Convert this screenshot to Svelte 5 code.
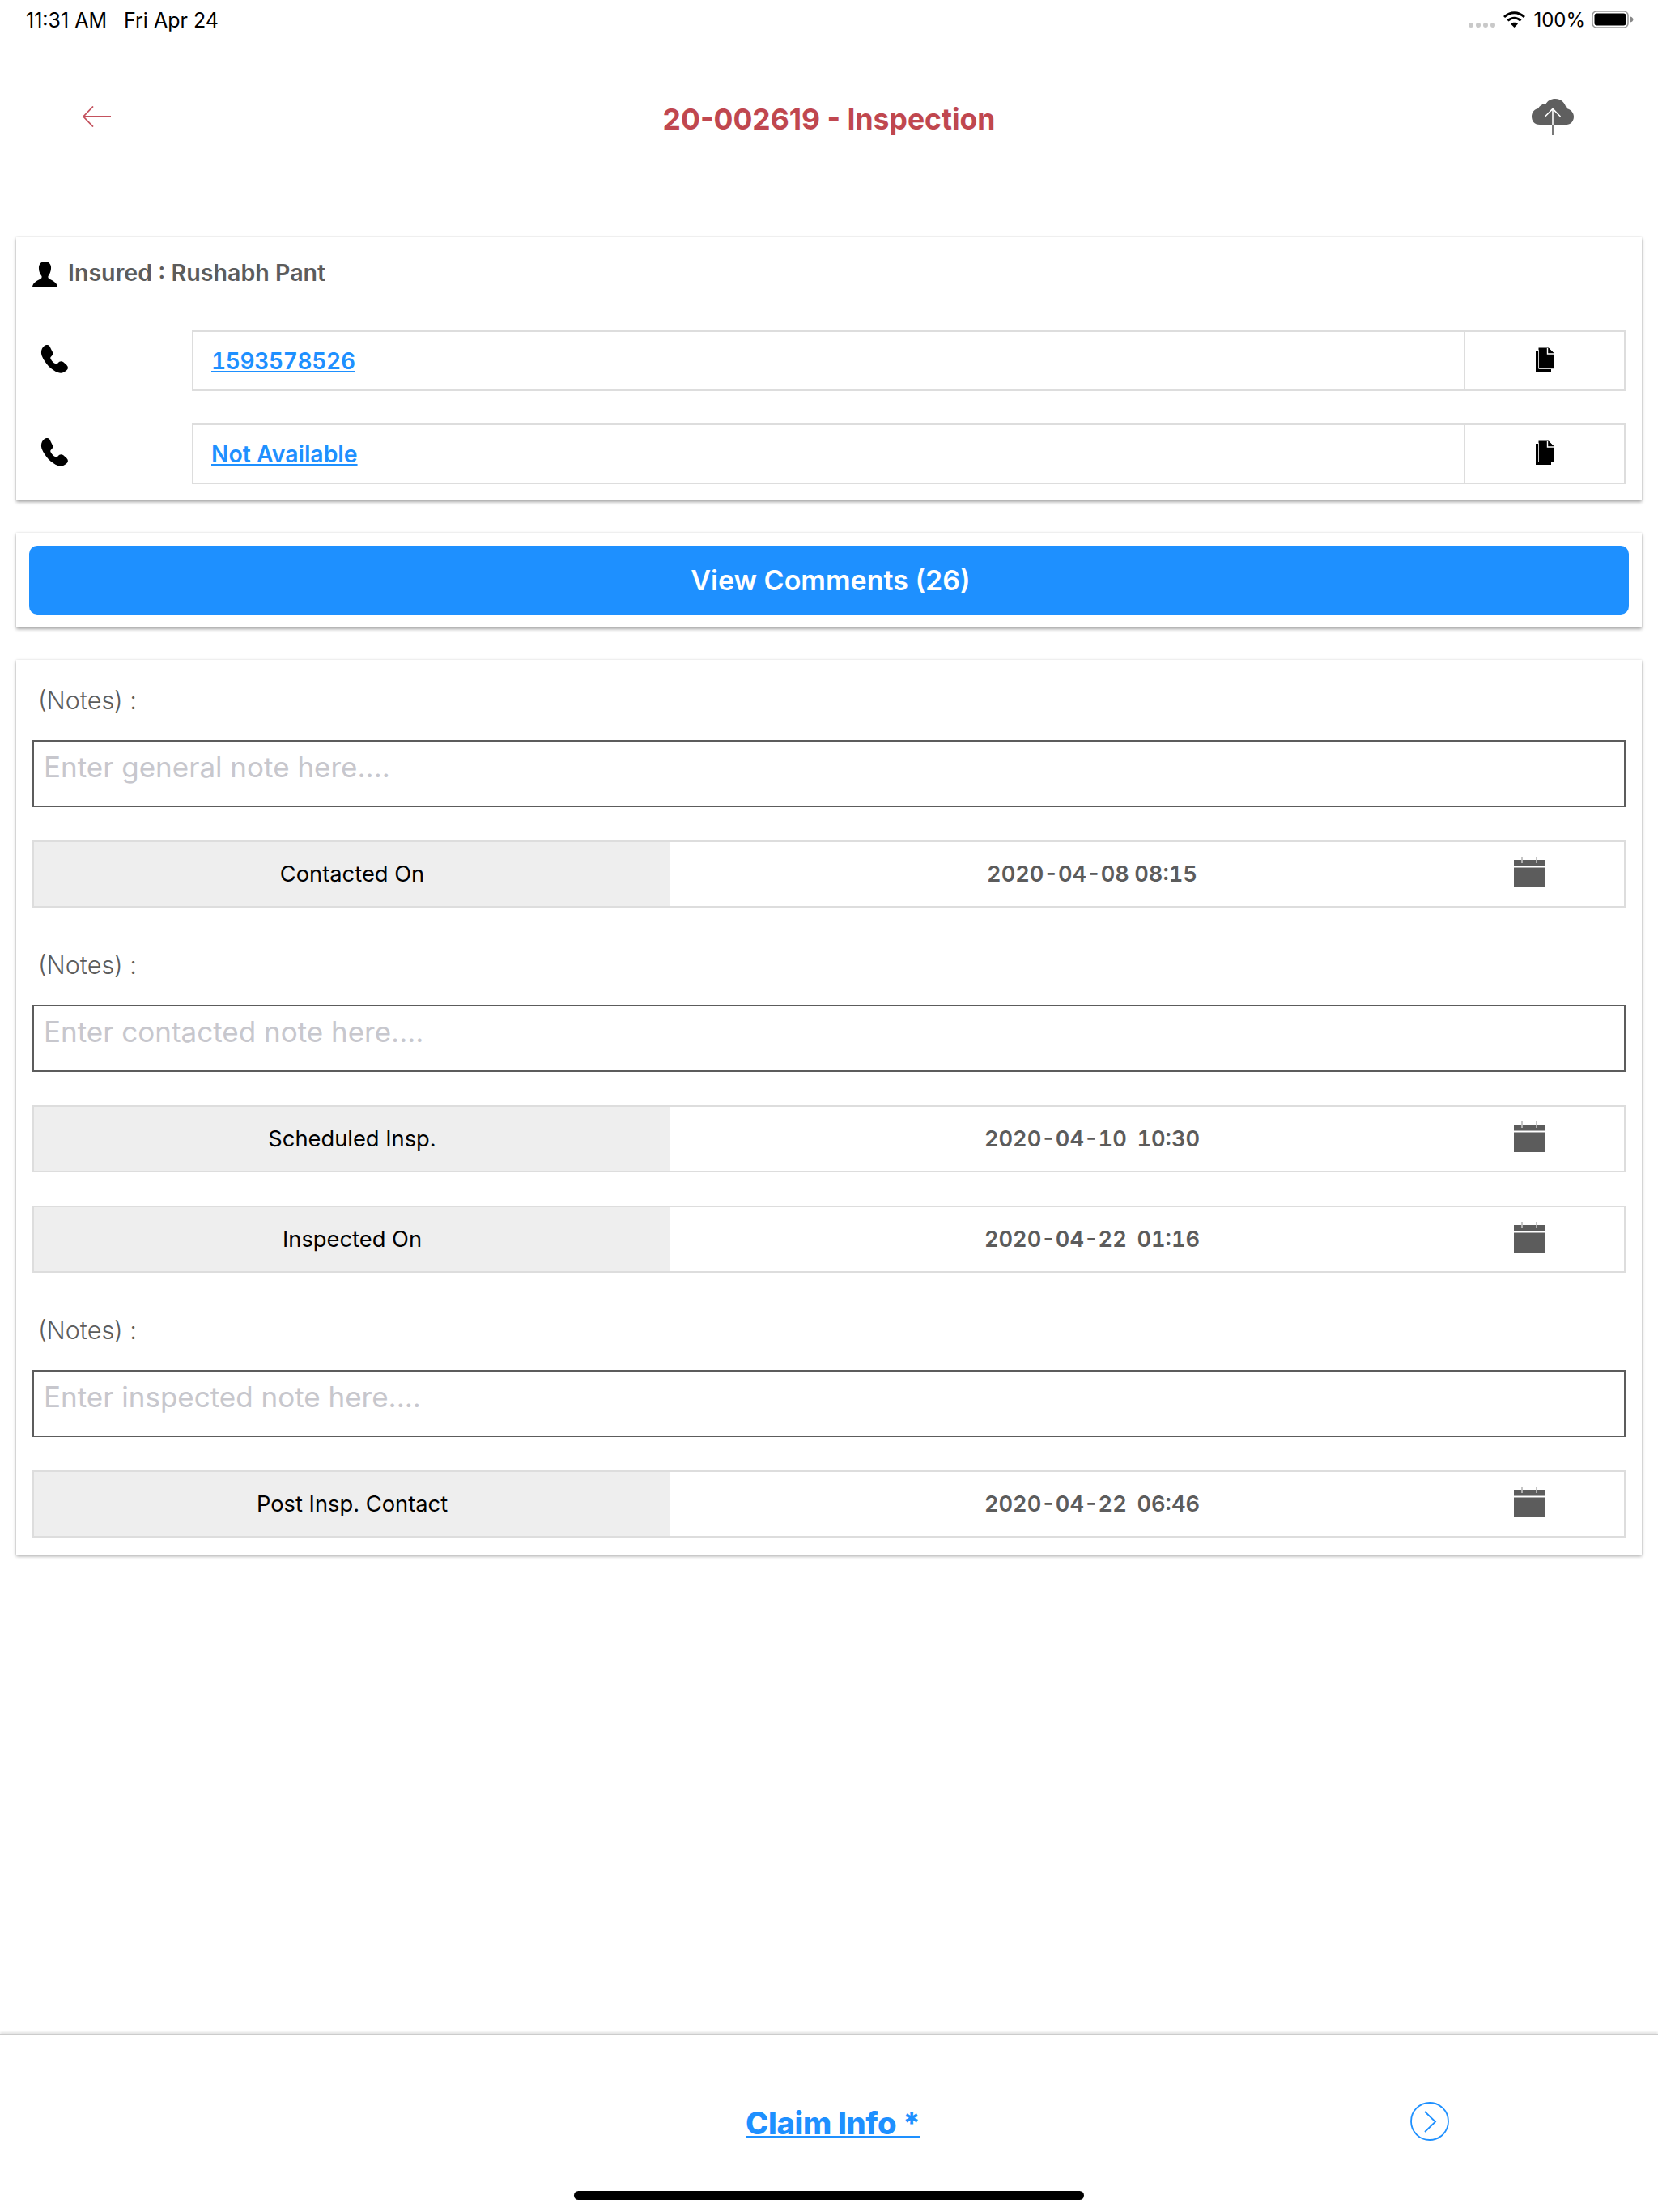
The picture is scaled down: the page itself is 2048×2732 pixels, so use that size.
<script>
  const blocks = [
    { note: 'Enter general note here....', rows: [['Contacted On', '2020-04-08 08:15']] },
    { note: 'Enter contacted note here....', rows: [['Scheduled Insp.', '2020-04-10  10:30'], ['Inspected On', '2020-04-22  01:16']] },
    { note: 'Enter inspected note here....', rows: [['Post Insp. Contact', '2020-04-22  06:46']] }
  ];
  const phones = ['1593578526', 'Not Available'];
</script>

{#snippet phoneIcon()}
  <svg class="phone" viewBox="0 0 34 35" width="34" height="35"><path d="M5 1C8 -1 11 0 12 3L15 9C16 11 15 13 13 14.500C12 15.500 12 16.500 13 18C14.500 20.500 16 22 18 23C19.500 24 20.500 23.500 21.500 22.500C23.500 20 25.500 19.500 28 21L32 24.500C34.500 27 34.500 29.500 32 31.500C29 34.500 25.500 35.500 21.500 34C13.500 31 5.500 23 1.500 13C0 8 1.500 3.500 5 1Z" fill="#000"/></svg>
{/snippet}

{#snippet copyIcon()}
  <svg viewBox="0 0 23 30" width="23" height="30"><path d="M0 4H4V26H19V30H0Z" fill="#000"/><path d="M3.500 0.500H16L22.500 7V26.500H3.500Z" fill="#000"/><path d="M4 26.500H22.500V25M3.500 26.500V3" fill="none" stroke="#ccc" stroke-width="1"/><path d="M14.500 1V8H22" fill="none" stroke="#fff" stroke-width="1.400"/><path d="M16 0L23 7V0Z" fill="#fff"/></svg>
{/snippet}

{#snippet calendar()}
  <svg class="cal" viewBox="0 0 38 38" width="38" height="38"><rect x="0" y="4" width="38" height="7.500" fill="#5c5c5c"/><rect x="0" y="13.500" width="38" height="24.500" fill="#5c5c5c"/><path d="M10 0V4M28 0V4" stroke="#8a8a8a" stroke-width="1"/><path d="M10 4V8M28 4V8" stroke="#fff" stroke-width="1"/></svg>
{/snippet}

<div class="page">
  <div class="status">
    <span class="time">11:31 AM</span>
    <span class="date">Fri Apr 24</span>
    <span class="spacer"></span>
    <span class="dots"><i></i><i></i><i></i><i></i></span>
    <svg class="wifi" viewBox="0 0 27 20" width="27" height="20"><path d="M1 7C8.500 0 18.500 0 26 7" fill="none" stroke="#000" stroke-width="3"/><path d="M5.500 11.500C10.500 7 16.500 7 21.500 11.500" fill="none" stroke="#000" stroke-width="3"/><path d="M9 15.500L13.500 20L18 15.500C15.500 13 11.500 13 9 15.500Z" fill="#000"/></svg>
    <span class="pct">100%</span>
    <svg class="batt" viewBox="0 0 52 22" width="52" height="22"><rect x="1" y="1" width="44" height="20" rx="5" fill="#fff" stroke="#999" stroke-width="1.600"/><rect x="3.500" y="3.500" width="39" height="15" rx="3" fill="#000"/><path d="M48 7.500C50 8 51.500 9.500 51.500 11C51.500 12.500 50 14 48 14.500Z" fill="#888"/></svg>
  </div>

  <header class="head">
    <svg class="back" viewBox="0 0 35 26" width="35" height="26"><path d="M35 13H1M13 0.500L1 13L13 25.500" fill="none" stroke="#c4525e" stroke-width="1.800"/></svg>
    <h1>20-002619 - Inspection</h1>
    <svg class="cloud" viewBox="0 0 52 45" width="52" height="45">
      <path d="M10 32C3 32 0 27 0 22C0 17 3 13 8 12C10 8 14 6 17 7C20 2 24 0 29 0C37 0 41 5 43 12C48 13 52 17 52 22C52 28 48 32 43 32Z" fill="#5f5f5f"/>
      <path d="M26 45V12M16.500 22L26 12.500L35.500 22" fill="none" stroke="#fff" stroke-width="1.600"/>
      <path d="M26 32V45" stroke="#6a6a6a" stroke-width="1.800"/>
    </svg>
  </header>

  <section class="card info">
    <div class="insured">
      <svg viewBox="0 0 31 31" width="31" height="31"><path d="M15.500 0C21 0 23.500 4 23 9C22.700 13 21 16 19.500 18C19 20 20 21 22 22C26 24 30 26 31 31L0 31C1 26 5 24 9 22C11 21 12 20 11.500 18C10 16 8 13 8 9C7.500 4 10 0 15.500 0Z" fill="#000"/></svg>
      <span>Insured : Rushabh Pant</span>
    </div>
    {#each phones as p, i}
      <div class="contact">
        <span class="phonecell">{@render phoneIcon()}</span>
        <div class="box">
          <a class="num" class:digits={i === 0} href="#top">{p}</a>
          <span class="copy">{@render copyIcon()}</span>
        </div>
      </div>
    {/each}
  </section>

  <section class="card comments">
    <button type="button">View Comments (26)</button>
  </section>

  <section class="card form">
    {#each blocks as b}
      <div class="notes">(Notes) :</div>
      <textarea class="field" placeholder={b.note} rows="1"></textarea>
      {#each b.rows as r}
        <div class="row">
          <div class="lbl">{r[0]}</div>
          <div class="val">{r[1]}</div>
          {@render calendar()}
        </div>
      {/each}
    {/each}
  </section>

  <footer class="foot">
    <div class="nav">
      <span></span>
      <a class="claim" href="#top">Claim Info *</a>
      <svg class="next" viewBox="0 0 48 48" width="48" height="48"><circle cx="24" cy="24" r="23" fill="none" stroke="#1e90ff" stroke-width="1.800"/><path d="M18 12L31 24.500L18 37" fill="none" stroke="#1e90ff" stroke-width="1.800"/></svg>
    </div>
    <div class="home"></div>
  </footer>
</div>

<style>
  :global(body) { margin: 0; background: #fff; }
  .page {
    width: 2048px;
    height: 2732px;
    display: flex;
    flex-direction: column;
    font-family: Inter, "Liberation Sans", sans-serif;
    color: #000;
    background: #fff;
    overflow: hidden;
  }
  .status {
    height: 44px;
    flex: none;
    display: flex;
    align-items: flex-start;
    padding: 11px 30px 0 32px;
    box-sizing: border-box;
    font-size: 24px;
    line-height: 28px;
  }
  .time, .date { font-size: 25px; }
  .date { margin-left: 21px; }
  .spacer { flex: 1; }
  .dots { display: flex; gap: 3px; margin-top: 17px; }
  .dots i { width: 6px; height: 6px; border-radius: 50%; background: #c9c9c9; }
  .wifi { margin: 3px 0 0 10px; }
  .pct { margin-left: 10px; }
  .batt { margin: 2px 0 0 8px; }
  .head {
    flex: none;
    height: 249px;
    box-sizing: border-box;
    padding: 80px 104px 0 102px;
    display: grid;
    grid-template-columns: 1fr auto 1fr;
    align-items: start;
  }
  .back { margin-top: 7px; }
  .cloud { justify-self: end; margin-top: -2px; }
  h1 {
    margin: 0 0 0 2px;
    font-size: 35.500px;
    line-height: 48px;
    font-weight: 650;
    color: #c0474f;
  }
  .card {
    flex: none;
    margin: 0 20px;
    background: #fff;
    box-shadow: 0 2px 4px rgba(0, 0, 0, 0.35), 0 0 2px rgba(0, 0, 0, 0.08);
  }
  .info { padding: 30px 20px 20px; }
  .insured {
    display: flex;
    align-items: center;
    gap: 13px;
    height: 31px;
    margin-bottom: 54px;
    font-size: 28.600px;
    font-weight: 600;
    color: #5c5c5c;
  }
  .insured span { margin-top: -5px; }
  .contact { display: flex; height: 75px; margin-top: 40px; }
  .insured + .contact { margin-top: 0; }
  .phonecell { width: 197px; flex: none; padding: 18px 0 0 10px; box-sizing: border-box; }
  .box {
    flex: 1;
    display: flex;
    border: 2px solid #ddd;
    align-items: stretch;
  }
  .num {
    flex: 1;
    display: flex;
    align-items: center;
    padding-left: 22px;
    font-size: 28.400px;
    font-weight: 600;
    color: #1e90ff;
    text-decoration: underline;
    border-right: 2px solid #ddd;
  }
  .digits {
    font-size: 28px;
    font-variant-numeric: tabular-nums;
    letter-spacing: -0.350px;
  }
  .copy {
    width: 196px;
    flex: none;
    display: flex;
    align-items: center;
    justify-content: center;
    padding-bottom: 3px;
    box-sizing: border-box;
  }
  .comments { margin-top: 40px; padding: 16px; }
  button {
    display: block;
    width: 100%;
    height: 85px;
    border: 0;
    border-radius: 10px;
    padding: 0 0 0 4px;
    background: #1e90ff;
    color: #fff;
    font: 600 34px Inter, "Liberation Sans", sans-serif;
  }
  .form { margin-top: 40px; padding: 0 20px 21px; }
  .notes {
    height: 40px;
    line-height: 40px;
    margin: 51px 0 29px 7px;
    font-size: 30.500px;
    font-weight: 300;
    color: #5c5c5c;
  }
  .form .notes:first-child { margin-top: 30px; }
  .field {
    display: block;
    width: 100%;
    height: 83px;
    box-sizing: border-box;
    border: 2px solid #5c5c5c;
    border-radius: 0;
    padding: 9px 12px;
    margin: 0;
    font: 400 35px/44px Inter, "Liberation Sans", sans-serif;
    resize: none;
    outline: 0;
    overflow: hidden;
  }
  .field::placeholder { color: #c7c7cd; opacity: 1; }
  .row {
    display: flex;
    align-items: center;
    height: 83px;
    box-sizing: border-box;
    margin-top: 41px;
    border: 2px solid #ddd;
    padding-right: 98px;
  }
  .cal { margin-bottom: 5px; }
  .lbl {
    width: 786px;
    flex: none;
    align-self: stretch;
    display: flex;
    align-items: center;
    justify-content: center;
    background: #eee;
    font-size: 27.300px;
  }
  .val {
    flex: 1;
    text-align: center;
    white-space: pre;
    font-size: 27.200px;
    word-spacing: -1px;
    font-weight: 600;
    font-variant-numeric: tabular-nums;
    color: #5c5c5c;
  }
  .foot {
    flex: 1;
    margin-top: 592px;
    display: flex;
    flex-direction: column;
    border-top: 2px solid #ccc;
    box-shadow: 0 -2px 3px rgba(0, 0, 0, 0.12);
  }
  .nav {
    display: grid;
    grid-template-columns: 1fr auto 1fr;
    align-items: center;
    padding: 84px 0 0 10px;
    height: 48px;
  }
  .claim {
    font-size: 38px;
    line-height: 48px;
    font-weight: 800;
    letter-spacing: -0.300px;
    color: #1e90ff;
    text-decoration: underline;
    text-decoration-thickness: 3px;
  }
  .next { margin-left: 605px; margin-top: -4px; }
  .home {
    width: 630px;
    height: 11px;
    margin: 60px 0 0 709px;
    border-radius: 6px;
    background: #000;
  }
</style>
